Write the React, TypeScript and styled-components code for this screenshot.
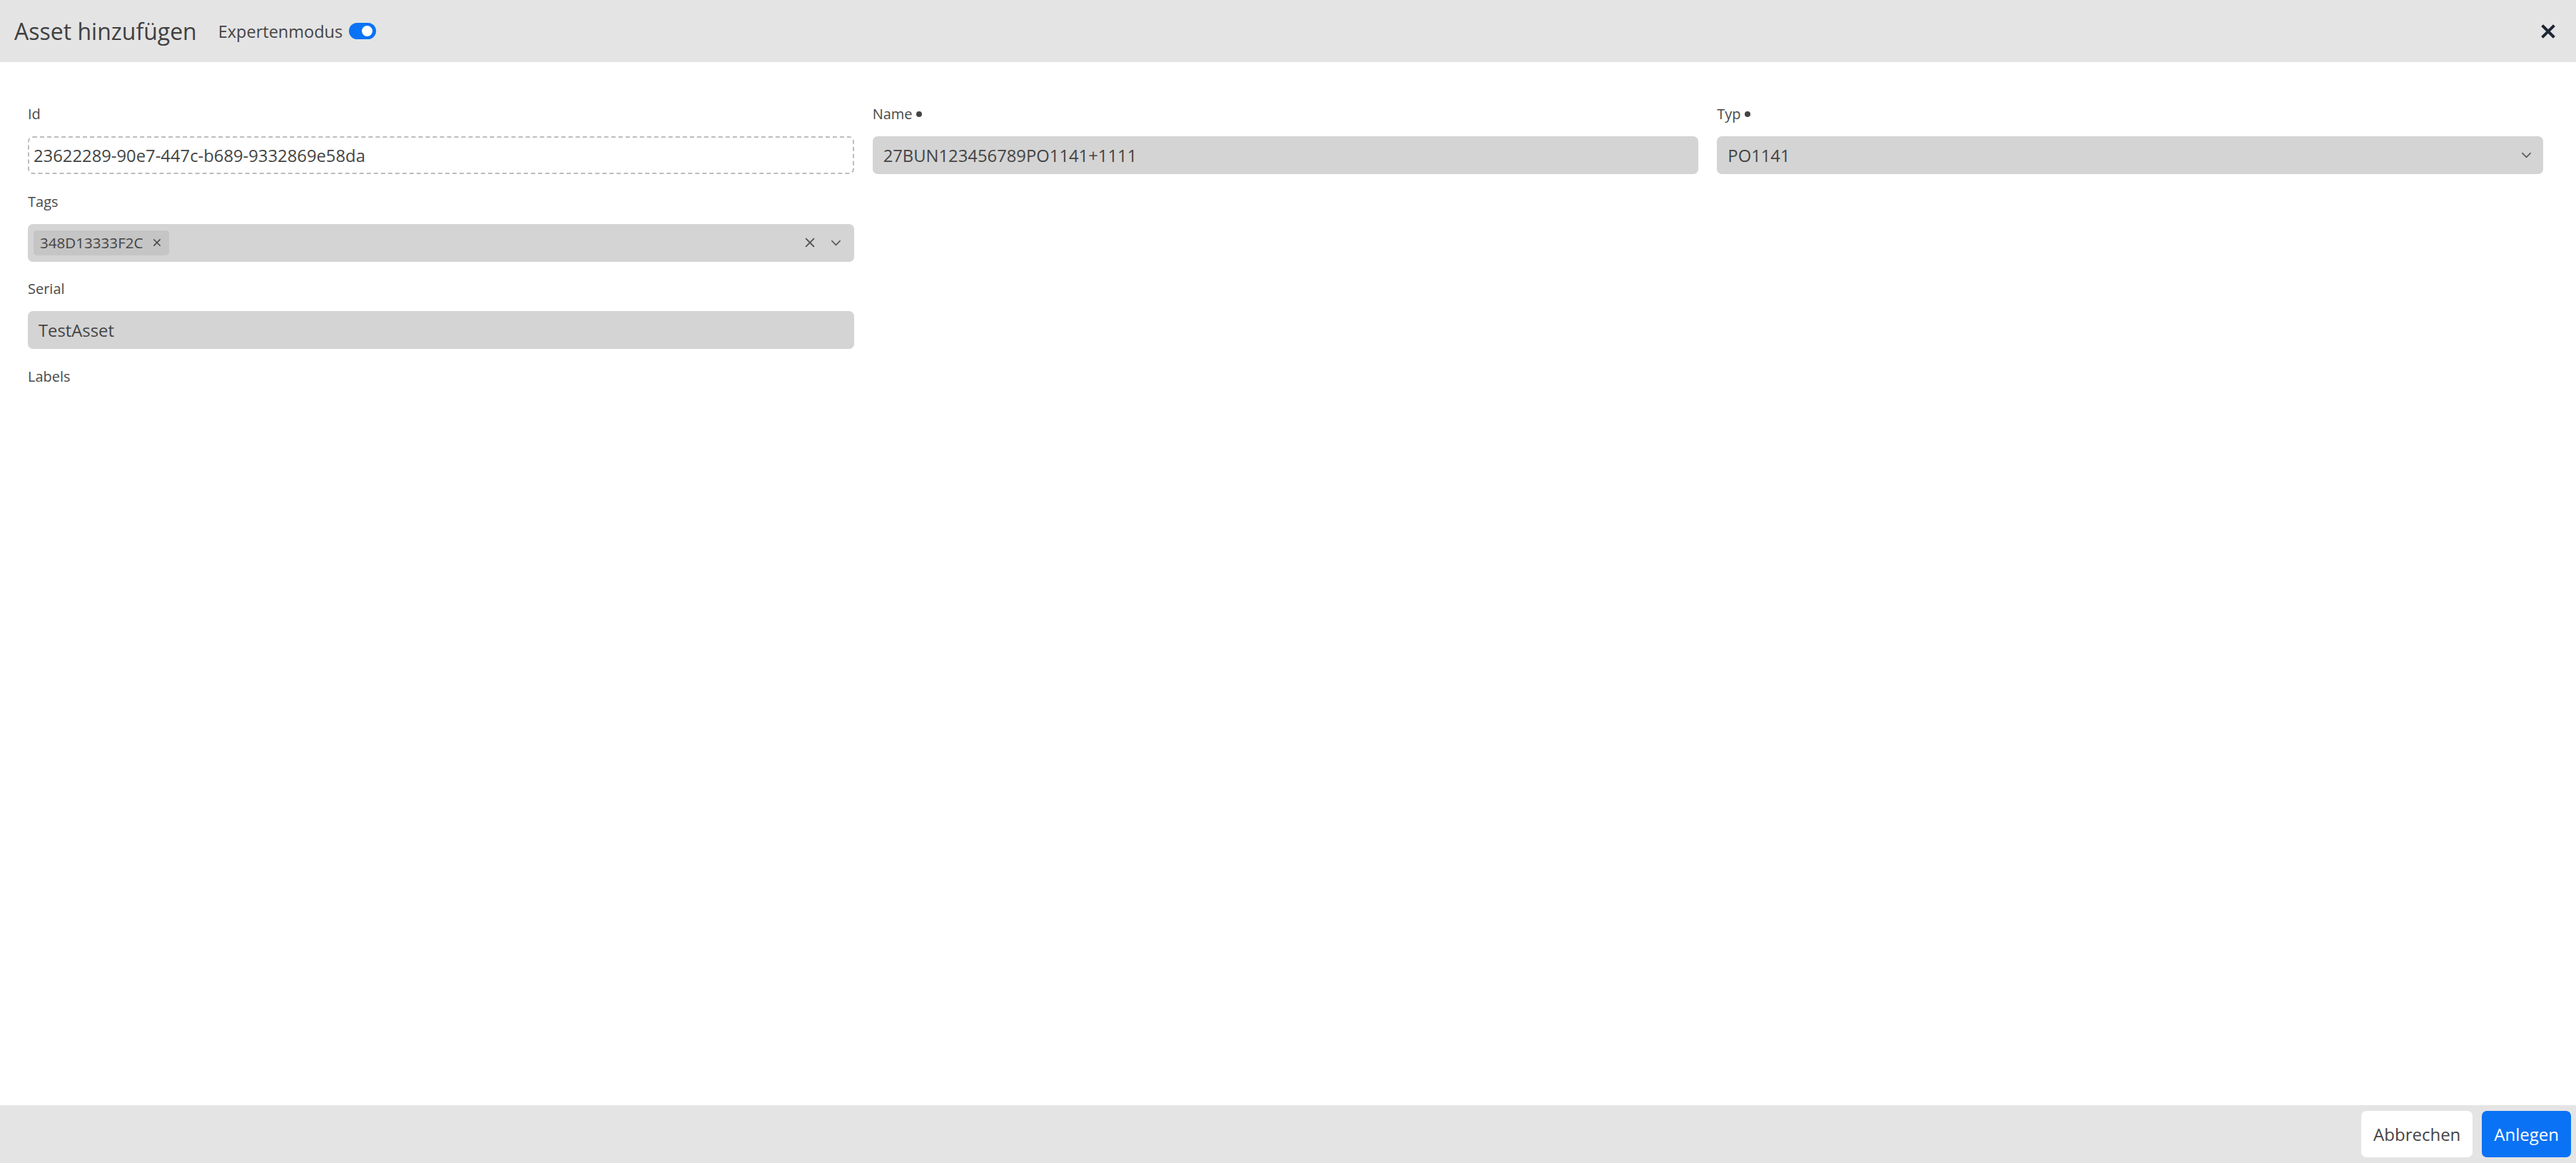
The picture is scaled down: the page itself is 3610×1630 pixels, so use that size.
import styled, { createGlobalStyle } from 'styled-components';

const GlobalStyle = createGlobalStyle`
  html, body {
    margin: 0;
    padding: 0;
    height: 100%;
  }
  body {
    font-family: 'Open Sans', 'Noto Sans', sans-serif;
    color: #444;
    background: #fff;
  }
  #root {
    height: 100%;
  }
`;

const Dialog = styled.div`
  height: 100vh;
  display: flex;
  flex-direction: column;
`;

const Header = styled.header`
  height: 87px;
  flex-shrink: 0;
  background: #e4e4e4;
  display: flex;
  align-items: center;
  padding: 0 27px 0 20px;
  gap: 30px;
`;

const Title = styled.h1`
  margin: 0;
  font-size: 32px;
  font-weight: 400;
  color: #404040;
`;

const ExpertToggle = styled.label`
  display: flex;
  align-items: center;
  gap: 9px;
  font-size: 23.5px;
  color: #444;
  flex: 1;
`;

const Switch = styled.span<{ $on: boolean }>`
  position: relative;
  width: 38px;
  height: 23px;
  border-radius: 12px;
  background: ${p => (p.$on ? '#0a72f4' : '#bbb')};

  &::after {
    content: '';
    position: absolute;
    top: 4px;
    left: ${p => (p.$on ? '18px' : '4px')};
    width: 15px;
    height: 15px;
    border-radius: 50%;
    background: #fff;
  }
`;

const CloseButton = styled.button`
  border: none;
  background: none;
  padding: 0;
  width: 24px;
  height: 24px;
  display: flex;
  align-items: center;
  justify-content: center;
  color: #1e2633;
  cursor: pointer;
`;

const Body = styled.main`
  flex: 1;
  padding: 58px 46px 0 39px;
  display: grid;
  grid-template-columns: repeat(3, 1fr);
  column-gap: 26px;
  row-gap: 23.5px;
  align-content: start;
`;

const Field = styled.div<{ $col?: number }>`
  display: flex;
  flex-direction: column;
  grid-column: ${p => p.$col ?? 'auto'};
`;

const Label = styled.div`
  font-size: 20px;
  line-height: 30px;
  color: #4a4a4a;
  margin-bottom: 16px;
  display: flex;
  align-items: center;
  gap: 5px;
`;

const Required = styled.span`
  width: 8px;
  height: 8px;
  border-radius: 50%;
  background: #444;
`;

const Input = styled.div<{ $readOnly?: boolean }>`
  height: 53px;
  box-sizing: border-box;
  border-radius: 7px;
  display: flex;
  align-items: center;
  font-size: 23.8px;
  color: #444;
  padding: ${p => (p.$readOnly ? '0 6px' : '0 15px')};
  background: ${p => (p.$readOnly ? '#fff' : '#d4d4d4')};
  border: ${p => (p.$readOnly ? '2px dashed #bdbdbd' : 'none')};
`;

const InputText = styled.span`
  flex: 1;
`;

const SelectBox = styled(Input)`
  padding: 0 17px 0 8px;
  gap: 19px;
`;

const Chip = styled.span`
  display: inline-flex;
  align-items: center;
  gap: 12px;
  height: 35px;
  padding: 0 10px 0 9px;
  border-radius: 5px;
  background: #c5c5c5;
  font-size: 20.6px;
  color: #444;
`;

const IconBtn = styled.span`
  display: flex;
  align-items: center;
  color: #555;
`;

const Footer = styled.footer`
  height: 81px;
  flex-shrink: 0;
  background: #e4e4e4;
  display: flex;
  justify-content: flex-end;
  align-items: center;
  gap: 13px;
  padding: 0 7px;
`;

const Button = styled.button<{ $primary?: boolean }>`
  height: 65px;
  padding: 0 17px;
  border: none;
  border-radius: 7px;
  font-family: 'Open Sans', 'Noto Sans', sans-serif;
  font-size: 24px;
  background: ${p => (p.$primary ? '#0a72f4' : '#fff')};
  color: ${p => (p.$primary ? '#fff' : '#444')};
  cursor: pointer;
`;

const Cross = ({ size, stroke }: { size: number; stroke: number }) => (
  <svg width={size} height={size} viewBox="0 0 24 24" fill="none" stroke="currentColor" strokeWidth={stroke} strokeLinecap="square">
    <path d="M5 5 L19 19 M19 5 L5 19" />
  </svg>
);

const Chevron = () => (
  <svg width="17" height="17" viewBox="0 0 24 24" fill="none" stroke="currentColor" strokeWidth="2.2" strokeLinecap="round" strokeLinejoin="round">
    <path d="M4 8 L12 16 L20 8" />
  </svg>
);

export default function App() {
  return (
    <>
      <GlobalStyle />
      <Dialog>
        <Header>
          <Title>Asset hinzufügen</Title>
          <ExpertToggle>
            Expertenmodus
            <Switch $on />
          </ExpertToggle>
          <CloseButton aria-label="Schließen">
            <Cross size={26} stroke={4} />
          </CloseButton>
        </Header>

        <Body>
          <Field>
            <Label>Id</Label>
            <Input $readOnly>
              <InputText>23622289-90e7-447c-b689-9332869e58da</InputText>
            </Input>
          </Field>
          <Field>
            <Label>
              Name <Required />
            </Label>
            <Input>
              <InputText>27BUN123456789PO1141+1111</InputText>
            </Input>
          </Field>
          <Field>
            <Label>
              Typ <Required />
            </Label>
            <Input>
              <InputText>PO1141</InputText>
              <IconBtn>
                <Chevron />
              </IconBtn>
            </Input>
          </Field>

          <Field $col={1}>
            <Label>Tags</Label>
            <SelectBox>
              <InputText>
                <Chip>
                  348D13333F2C
                  <Cross size={14} stroke={2.6} />
                </Chip>
              </InputText>
              <IconBtn>
                <Cross size={18} stroke={2.4} />
              </IconBtn>
              <IconBtn>
                <Chevron />
              </IconBtn>
            </SelectBox>
          </Field>

          <Field $col={1}>
            <Label>Serial</Label>
            <Input>
              <InputText>TestAsset</InputText>
            </Input>
          </Field>

          <Field $col={1}>
            <Label>Labels</Label>
          </Field>
        </Body>

        <Footer>
          <Button>Abbrechen</Button>
          <Button $primary>Anlegen</Button>
        </Footer>
      </Dialog>
    </>
  );
}
